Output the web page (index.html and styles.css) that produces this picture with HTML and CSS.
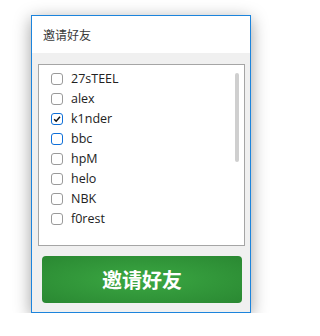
FILE: index.html
```html
<!DOCTYPE html>
<html lang="zh-CN">
<head>
<meta charset="utf-8">
<title>邀请好友</title>
<link rel="stylesheet" href="styles.css">
</head>
<body>
<div class="page">
  <div class="window">
    <div class="titlebar">邀请好友</div>
    <div class="content">
      <div class="listbox">
        <ul class="list">
          <li class="item"><span class="cb"></span><span class="name">27sTEEL</span></li>
          <li class="item"><span class="cb"></span><span class="name">alex</span></li>
          <li class="item"><span class="cb checked"><svg viewBox="0 0 12 12" width="12" height="12"><path d="M2.6 6.2 L5 8.6 L9.6 3.4" fill="none" stroke="#111" stroke-width="1.8"/></svg></span><span class="name">k1nder</span></li>
          <li class="item"><span class="cb focus"></span><span class="name">bbc</span></li>
          <li class="item"><span class="cb"></span><span class="name">hpM</span></li>
          <li class="item"><span class="cb"></span><span class="name">helo</span></li>
          <li class="item"><span class="cb"></span><span class="name">NBK</span></li>
          <li class="item"><span class="cb"></span><span class="name">f0rest</span></li>
        </ul>
        <div class="scrollbar"></div>
      </div>
      <button class="invite">邀请好友</button>
    </div>
  </div>
</div>
</body>
</html>
```
FILE: styles.css
```css
html, body {
  margin: 0;
  padding: 0;
  background: #ffffff;
}
.page {
  padding: 15px 0 0 31px;
}
.window {
  width: 218px;
  height: 296px;
  border: 1px solid #1c84dc;
  box-shadow: 0 4px 16px rgba(0, 0, 0, 0.38);
  display: flex;
  flex-direction: column;
  font-family: "Noto Sans CJK SC", "Noto Sans", sans-serif;
}
.titlebar {
  height: 37px;
  background: #ffffff;
  padding-left: 11px;
  display: flex;
  align-items: center;
  font-size: 12px;
  color: #3a3a3a;
}
.content {
  flex: 1;
  background: #f0f0f0;
  padding: 11px 5px 0 6px;
  display: flex;
  flex-direction: column;
}
.listbox {
  position: relative;
  height: 180px;
  border: 1px solid #a5a5a5;
  background: #ffffff;
}
.list {
  list-style: none;
  margin: 0;
  padding: 4px 0 0 12px;
}
.item {
  height: 20px;
  display: flex;
  align-items: center;
  gap: 8px;
}
.cb {
  box-sizing: border-box;
  width: 12px;
  height: 12px;
  border: 1px solid #9a9a9a;
  border-radius: 3px;
  background: #ffffff;
  display: flex;
  align-items: center;
  justify-content: center;
}
.cb svg {
  display: block;
}
.cb.checked,
.cb.focus {
  border: 1.5px solid #0f6fd8;
}
.name {
  font-family: "Open Sans", "Noto Sans", sans-serif;
  font-size: 12.5px;
  color: #222;
  line-height: 1;
}
.scrollbar {
  position: absolute;
  top: 8px;
  right: 5px;
  width: 4px;
  height: 89px;
  background: #cfcfcf;
  border-radius: 2px;
}
.invite {
  margin: 10px 3px 0 4px;
  height: 47px;
  border: none;
  border-radius: 4px;
  background: radial-gradient(ellipse at center, #3ba842 0%, #33993b 45%, #2a8832 100%);
  color: #ffffff;
  font-family: "Noto Sans CJK SC", sans-serif;
  font-size: 20px;
  font-weight: 700;
  padding: 0;
}
```
